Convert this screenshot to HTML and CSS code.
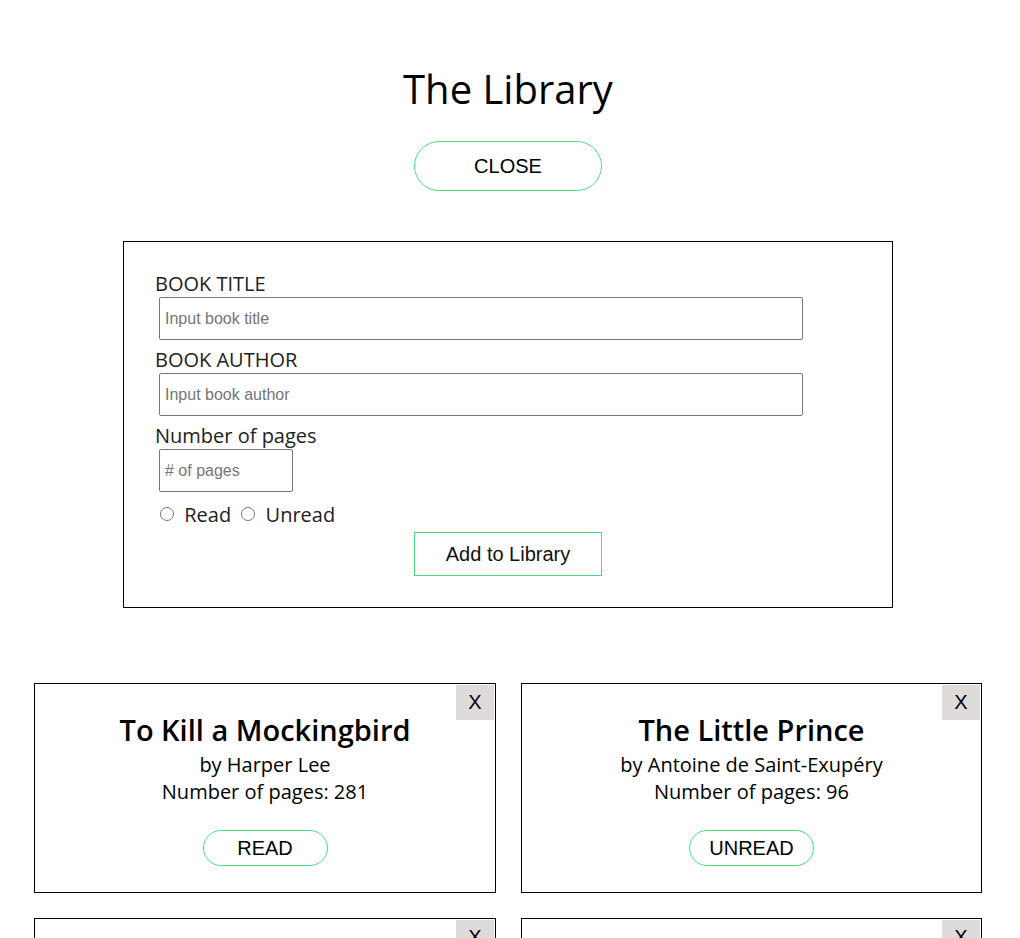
FILE: index.html
```html
<!DOCTYPE html>
<html lang="en">
<head>
<meta charset="utf-8">
<title>The Library</title>
<link rel="stylesheet" href="styles.css">
</head>
<body>
<div class="page">
  <h1 class="title">The Library</h1>
  <div class="toggle-row">
    <button class="pill-btn close-btn" type="button">CLOSE</button>
  </div>
  <form class="book-form">
    <label class="field-label" for="title">BOOK TITLE</label>
    <input class="text-input wide" id="title" type="text" placeholder="Input book title">
    <label class="field-label" for="author">BOOK AUTHOR</label>
    <input class="text-input wide" id="author" type="text" placeholder="Input book author">
    <label class="field-label" for="pages">Number of pages</label>
    <input class="text-input narrow" id="pages" type="number" placeholder="# of pages">
    <div class="radio-row">
      <input class="radio" type="radio" name="status" id="read"> <label for="read">Read</label>
      <input class="radio" type="radio" name="status" id="unread"> <label for="unread">Unread</label>
    </div>
    <div class="submit-row">
      <button class="submit-btn" type="button">Add to Library</button>
    </div>
  </form>
  <div class="cards">
    <div class="card">
      <button class="remove-btn" type="button">X</button>
      <h2 class="card-title">To Kill a Mockingbird</h2>
      <p class="card-line">by Harper Lee</p>
      <p class="card-line">Number of pages: 281</p>
      <button class="pill-btn status-btn" type="button">READ</button>
    </div>
    <div class="card">
      <button class="remove-btn" type="button">X</button>
      <h2 class="card-title">The Little Prince</h2>
      <p class="card-line">by Antoine de Saint-Exupéry</p>
      <p class="card-line">Number of pages: 96</p>
      <button class="pill-btn status-btn" type="button">UNREAD</button>
    </div>
    <div class="card">
      <button class="remove-btn" type="button">X</button>
      <h2 class="card-title">1984</h2>
      <p class="card-line">by George Orwell</p>
      <p class="card-line">Number of pages: 328</p>
      <button class="pill-btn status-btn" type="button">UNREAD</button>
    </div>
    <div class="card">
      <button class="remove-btn" type="button">X</button>
      <h2 class="card-title">Pride and Prejudice</h2>
      <p class="card-line">by Jane Austen</p>
      <p class="card-line">Number of pages: 432</p>
      <button class="pill-btn status-btn" type="button">READ</button>
    </div>
  </div>
</div>
</body>
</html>
```

FILE: styles.css
```css
* {
  box-sizing: border-box;
}

body {
  margin: 0;
  font-family: "Open Sans", "Liberation Sans", sans-serif;
  color: #000;
  background: #fff;
}

.page {
  padding: 0 12px 40px 8px;
  display: flex;
  flex-direction: column;
  align-items: center;
}

.title {
  margin: 61px 0 0;
  font-size: 40px;
  font-weight: 400;
  line-height: 55px;
  text-align: center;
}

.toggle-row {
  margin-top: 25px;
  display: flex;
  justify-content: center;
}

.pill-btn {
  font-family: "Liberation Sans", Arial, sans-serif;
  font-size: 20px;
  color: #000;
  background: #fff;
  border: 1px solid #4ade80;
  cursor: pointer;
  padding: 0;
}

.close-btn {
  width: 188px;
  height: 50px;
  border-radius: 25px;
}

.book-form {
  margin-top: 50px;
  width: 770px;
  border: 1px solid #000;
  padding: 28px 31px 31px 31px;
  display: flex;
  flex-direction: column;
  align-items: flex-start;
}

.field-label {
  font-size: 20px;
  line-height: 27px;
  color: #222;
}

.text-input {
  margin: 0 0 6px 4px;
  height: 43px;
  border: 1px solid #767676;
  border-radius: 2px;
  padding: 0 5px;
  font-family: "Liberation Sans", Arial, sans-serif;
  font-size: 16px;
  color: #000;
}

.text-input::placeholder {
  color: #757575;
}

.wide {
  width: 644px;
}

.narrow {
  width: 134px;
  -moz-appearance: textfield;
}

.narrow::-webkit-outer-spin-button,
.narrow::-webkit-inner-spin-button {
  -webkit-appearance: none;
  margin: 0;
}

.radio-row {
  display: block;
  margin-top: 3px;
  font-size: 20px;
  line-height: 27px;
  color: #222;
}

.radio {
  margin: 0 5px 0 5px;
  width: 14px;
  height: 14px;
  vertical-align: 1px;
}

.submit-row {
  align-self: stretch;
  display: flex;
  justify-content: center;
  margin-top: 4px;
}

.submit-btn {
  width: 188px;
  height: 44px;
  background: #fff;
  border: 1px solid #4ade80;
  font-family: "Liberation Sans", Arial, sans-serif;
  font-size: 20px;
  color: #111;
  padding: 0;
  cursor: pointer;
}

.cards {
  margin-top: 75px;
  display: grid;
  grid-template-columns: 462px 461px;
  grid-auto-rows: 210px;
  gap: 25px;
}

.card {
  position: relative;
  border: 1px solid #000;
  padding-top: 26px;
  display: flex;
  flex-direction: column;
  align-items: center;
}

.remove-btn {
  position: absolute;
  top: 1px;
  right: 1px;
  width: 38px;
  height: 35px;
  border: none;
  background: #e0dbdb;
  font-family: "Liberation Sans", Arial, sans-serif;
  font-size: 20px;
  color: #000;
  padding: 0;
  cursor: pointer;
}

.card-title {
  margin: 0 0 1px;
  font-size: 29px;
  font-weight: 600;
  line-height: 40px;
}

.card-line {
  margin: 0;
  font-size: 20px;
  line-height: 27px;
}

.status-btn {
  margin-top: 25px;
  width: 125px;
  height: 36px;
  border-radius: 18px;
}
```
